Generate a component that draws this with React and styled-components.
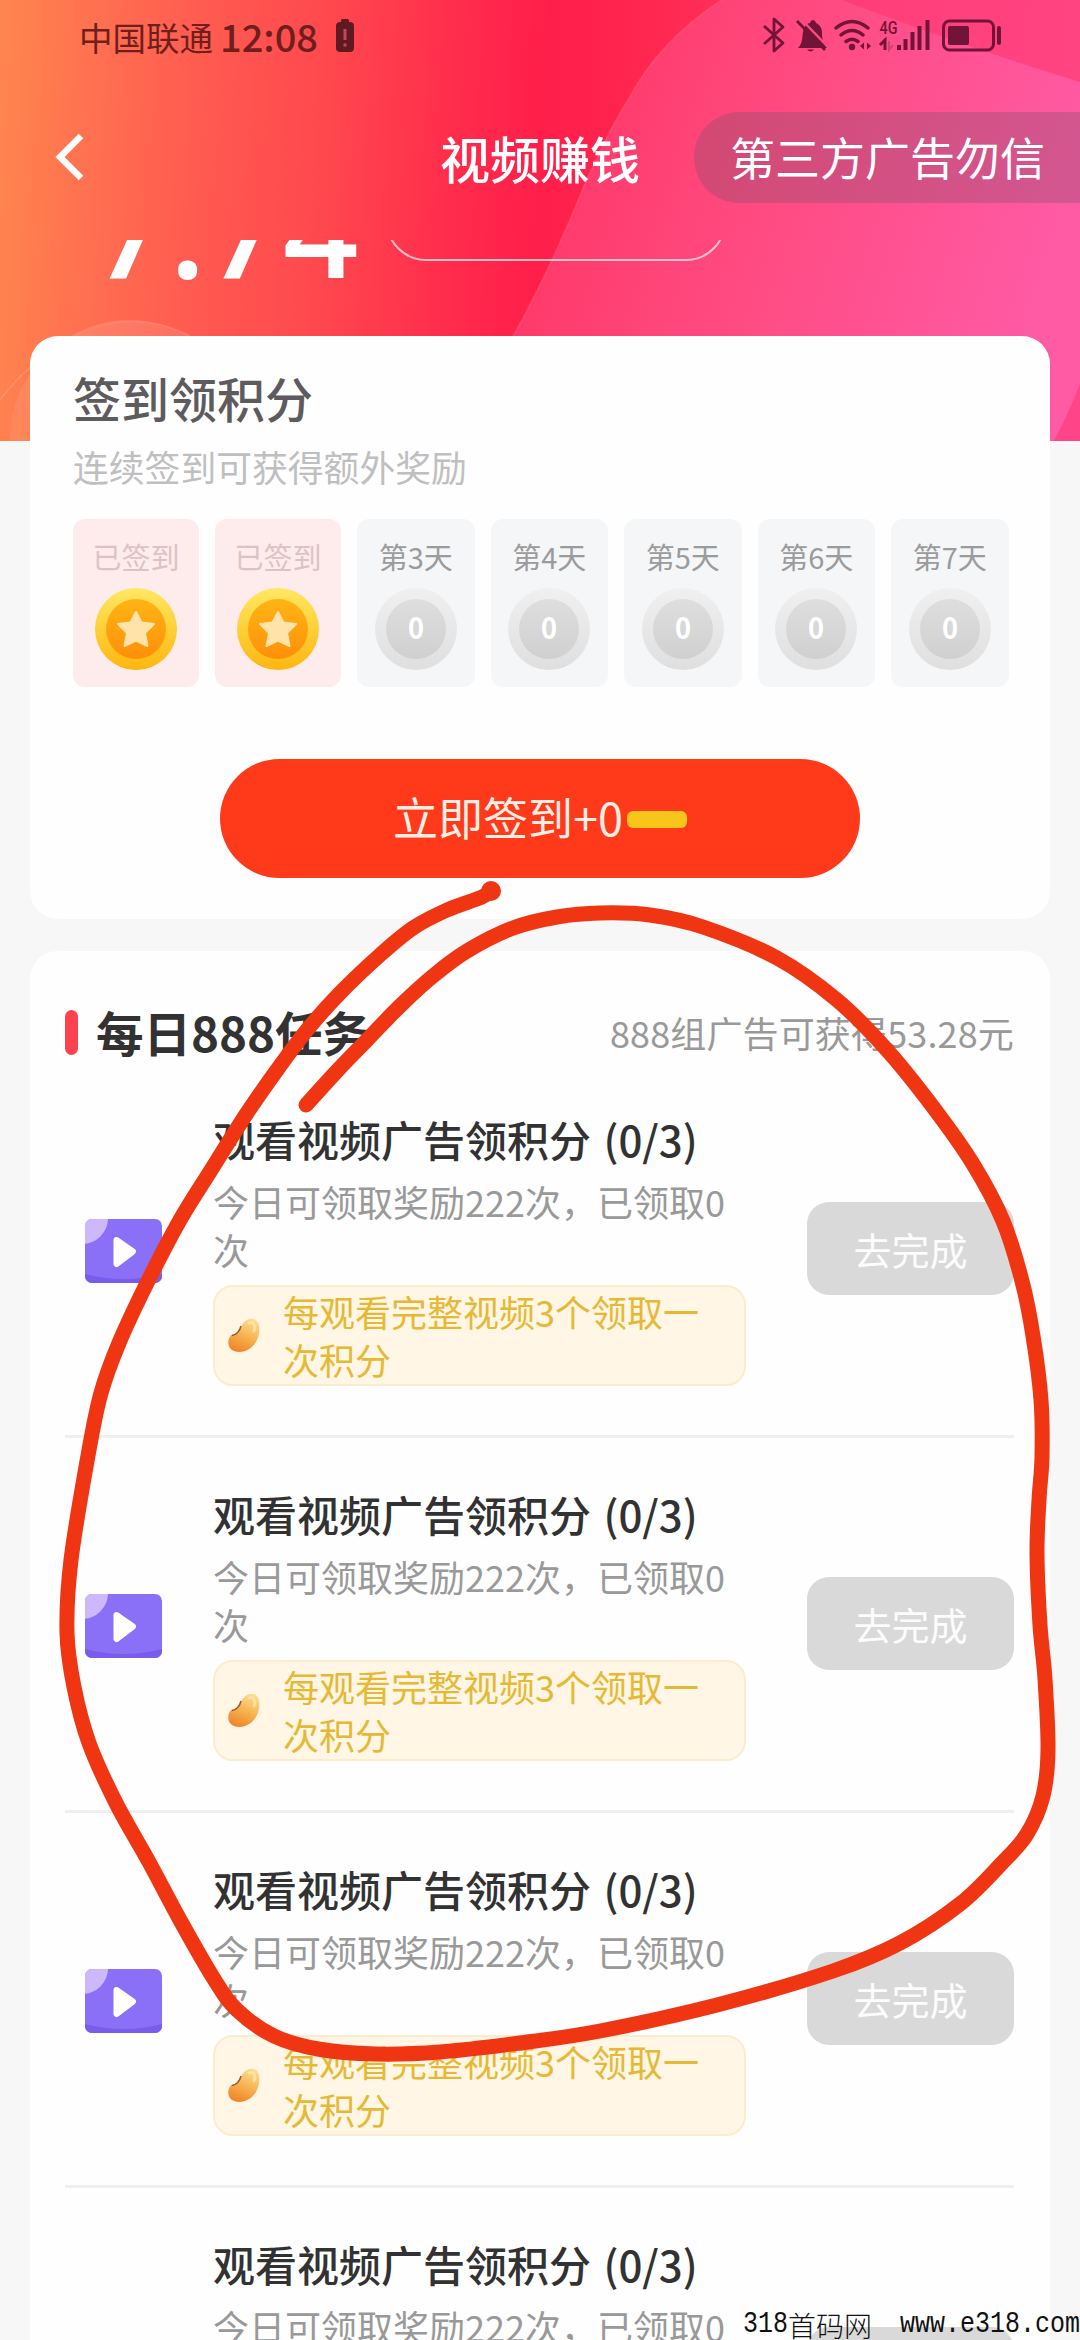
import styled, { createGlobalStyle } from 'styled-components'

const days = [
  { label: '已签到', done: true },
  { label: '已签到', done: true },
  { label: '第3天' },
  { label: '第4天' },
  { label: '第5天' },
  { label: '第6天' },
  { label: '第7天' },
]

const tasks = [1, 2, 3, 4]

// freehand stroke, drawn as a smooth curve through these points
const strokePoints = [
  [492, 890], [482, 897], [447, 910], [413, 928], [380, 955],
  [340, 993], [307, 1030], [277, 1070], [247, 1113], [213, 1167],
  [180, 1220], [147, 1283], [119, 1343], [101, 1393], [89, 1450],
  [71, 1560], [67, 1633], [74, 1687], [89, 1743], [116, 1803], [149, 1862],
  [180, 1920], [214, 1979], [237, 2010], [274, 2036], [318, 2049],
  [375, 2054], [440, 2052], [520, 2043], [600, 2031], [717, 2005],
  [833, 1971], [900, 1943], [960, 1904], [1002, 1863], [1027, 1834],
  [1043, 1796], [1048, 1750], [1045, 1679], [1040, 1625], [1037, 1554],
  [1039, 1500], [1042, 1457], [1041, 1400], [1033, 1336], [1022, 1281],
  [1003, 1221], [973, 1164], [933, 1107], [887, 1050], [837, 1000],
  [777, 958], [703, 927], [650, 915], [600, 913], [557, 917], [513, 928],
  [467, 951], [433, 976], [400, 1006], [367, 1040], [337, 1071],
  [306, 1105],
]

const smooth = (pts) =>
  pts.slice(0, -1).reduce((d, p, i) => {
    const prev = pts[i - 1] || p
    const next = pts[i + 1]
    const after = pts[i + 2] || next
    const c1 = [p[0] + (next[0] - prev[0]) / 6, p[1] + (next[1] - prev[1]) / 6]
    const c2 = [next[0] - (after[0] - p[0]) / 6, next[1] - (after[1] - p[1]) / 6]
    return `${d} C${c1} ${c2} ${next}`
  }, `M${pts[0]}`)

const HeaderArt = () => (
  <Backdrop viewBox="0 0 1080 441">
    <defs>
      <linearGradient id="blob" gradientUnits="userSpaceOnUse" x1="560" y1="0" x2="1080" y2="160">
        <stop offset="0" stopColor="#ff3564" />
        <stop offset="0.45" stopColor="#ff4a80" />
        <stop offset="1" stopColor="#ff5aa4" />
      </linearGradient>
      <linearGradient id="left" x1="0" y1="0" x2="0" y2="1">
        <stop offset="0" stopColor="#fff" stopOpacity="0.12" />
        <stop offset="1" stopColor="#fff" stopOpacity="0" />
      </linearGradient>
    </defs>
    <path
      d="M500 360 Q540 290 570 220 Q600 145 628 100 Q660 40 722 0 H842 Q960 45 1080 82 V441 H500Z"
      fill="url(#blob)"
    />
    <path
      d="M500 360 Q540 290 570 220 Q600 145 628 100 Q660 40 722 0"
      fill="none"
      stroke="#ff6a80"
      strokeOpacity="0.35"
      strokeWidth="2"
    />
    <path d="M1054 441 Q1068 415 1080 384 V441Z" fill="#ff4488" />
    <circle cx="130" cy="440" r="120" fill="url(#left)" />
    <path d="M70 338 Q130 306 190 336" fill="none" stroke="#ff8a70" strokeOpacity="0.5" strokeWidth="2" />
    <path d="M0 400 Q15 380 32 366" fill="none" stroke="#ffa080" strokeOpacity="0.5" strokeWidth="2" />
  </Backdrop>
)

const LowBattery = () => (
  <svg width="20" height="34" viewBox="0 0 20 34">
    <rect x="6" y="0" width="8" height="5" rx="1.5" fill="#5e1a20" />
    <rect x="1" y="3" width="18" height="30" rx="4" fill="#5e1a20" />
    <path d="M10 10v11M10 24.5v3" stroke="#c24a50" strokeWidth="3" />
  </svg>
)

const StatusIcons = () => (
  <svg width="242" height="38" viewBox="762 18 242 38" fill="none" stroke="#721437">
    <path d="M764 27 L783 44 L774 52 V20 L783 28 L764 45" strokeWidth="2.8" strokeLinejoin="round" />
    <path
      d="M798 49 C803 44 802 38 803 33 C804 27 808 24 810 24 C811 20 815 20 816 24 C820 26 822 29 822 34 C822 40 823 44 827 49Z"
      fill="#721437"
      stroke="none"
    />
    <path d="M807 50.500 h7 q-3.500 4 -7 0z" fill="#721437" stroke="none" />
    <path d="M801 20 L829 49" stroke="#ff4a80" strokeWidth="2.500" />
    <path d="M797 22 L825 51" strokeWidth="2.8" />
    <path d="M836 29 Q852 16 868 29 M841 36 Q852 27 863 36 M846 42.500 Q852 38 858 42.500" strokeWidth="3.500" strokeLinecap="round" />
    <circle cx="852" cy="48" r="3.200" fill="#721437" stroke="none" />
    <path d="M864 43.500v7l-4-3.500zM867 43.500v7l4-3.500z" fill="#721437" stroke="none" />
    <text
      x="879.500"
      y="35"
      fill="#721437"
      stroke="none"
      fontFamily="Roboto, sans-serif"
      fontWeight="500"
      fontSize="18"
      textLength="18"
      lengthAdjust="spacingAndGlyphs"
    >
      4G
    </text>
    <path d="M880 46 L885 41 V51" strokeWidth="3" />
    <path d="M889 42 V51 L893 46" strokeWidth="2" strokeOpacity="0.3" />
    <path d="M899 46v5M905.500 40v11M912.500 33v18M919.500 27v24M927.500 21v30" strokeWidth="4" />
    <rect x="943.500" y="22" width="50" height="29" rx="6" strokeWidth="3" />
    <rect x="948" y="27" width="21" height="19" rx="2" fill="#721437" stroke="none" />
    <path d="M999 29v15" strokeWidth="4" strokeLinecap="round" />
  </svg>
)

const Coin = ({ done }) => (
  <CoinBox>
    <svg width="82" height="82" viewBox="0 0 82 82">
      <defs>
        <linearGradient id="goldRim" x1="0" y1="0" x2="0" y2="1">
          <stop offset="0" stopColor="#ffe862" />
          <stop offset="1" stopColor="#fdb60f" />
        </linearGradient>
        <linearGradient id="goldFace" x1="0" y1="0" x2="0" y2="1">
          <stop offset="0" stopColor="#ffb514" />
          <stop offset="1" stopColor="#ff8f0a" />
        </linearGradient>
        <linearGradient id="greyRim" x1="0" y1="0" x2="0" y2="1">
          <stop offset="0" stopColor="#f0f0f1" />
          <stop offset="1" stopColor="#dfdfe0" />
        </linearGradient>
        <linearGradient id="greyFace" x1="0" y1="0" x2="0" y2="1">
          <stop offset="0" stopColor="#dedede" />
          <stop offset="1" stopColor="#d0d0d0" />
        </linearGradient>
      </defs>
      <circle cx="41" cy="41" r="41" fill={done ? 'url(#goldRim)' : 'url(#greyRim)'} />
      <circle cx="41" cy="41" r="30" fill={done ? 'url(#goldFace)' : 'url(#greyFace)'} />
      {done && (
        <path
          d="M41 24 L46.500 34.500 L59 36 L50 45 L52.500 58 L41 52.500 L29.500 58 L32 45 L23 36 L35.500 34.500Z"
          fill="#ffe3a8"
          stroke="#ffe3a8"
          strokeWidth="2"
          strokeLinejoin="round"
        />
      )}
    </svg>
    {!done && <CoinValue>0</CoinValue>}
  </CoinBox>
)

const VideoIcon = () => (
  <VideoSvg width="77" height="64" viewBox="0 0 77 64">
    <defs>
      <clipPath id="tile">
        <rect width="77" height="64" rx="7" />
      </clipPath>
    </defs>
    <g clipPath="url(#tile)">
      <rect width="77" height="64" fill="#8a70f7" />
      <circle cx="-3" cy="-1" r="26" fill="#cdb8fb" />
      <path d="M0 55 Q38 65 77 55 V64 H0Z" fill="#7a5ced" />
    </g>
    <path d="M31.500 21 L48 32.500 L31.500 45Z" fill="#fff" stroke="#fff" strokeWidth="6" strokeLinejoin="round" />
  </VideoSvg>
)

const Bean = () => (
  <svg width="34" height="36" viewBox="0 0 34 36">
    <defs>
      <linearGradient id="bean" x1="0.700" y1="0" x2="0.300" y2="1">
        <stop offset="0" stopColor="#fbdc92" />
        <stop offset="0.500" stopColor="#f7b350" />
        <stop offset="1" stopColor="#ee8428" />
      </linearGradient>
    </defs>
    <path
      d="M14 10 C17 3 24 0 29 3 C34 7 33 18 29 25 C24 33 15 37 7 34 C0 31 0 23 4 18 C9 18 13 15 14 10Z"
      fill="url(#bean)"
    />
    <path d="M14 9 C13 14 9 18 5 18.500" fill="none" stroke="#9a5a28" strokeWidth="1.500" />
    <path d="M22 6 C26 4 29 8 27 14" fill="none" stroke="#fff0c4" strokeWidth="3" strokeLinecap="round" opacity="0.500" />
  </svg>
)

const App = () => (
  <Screen>
    <GlobalStyle />
    <HeaderArt />
    <StatusBar>
      <Carrier>中国联通</Carrier>
      <Clock>12:08</Clock>
      <LowBattery />
      <StatusRight>
        <StatusIcons />
      </StatusRight>
    </StatusBar>
    <NavBar>
      <BackButton>
        <svg width="30" height="48" viewBox="0 0 30 48">
          <path d="M27 3 L6 24 L27 45" fill="none" stroke="#fff" strokeWidth="6.500" />
        </svg>
      </BackButton>
      <NavTitle>视频赚钱</NavTitle>
      <Warning>第三方广告勿信</Warning>
    </NavBar>
    <Balance>
      <Amount>7.74</Amount>
      <Withdraw />
    </Balance>

    <SignCard>
      <SignTitle>签到领积分</SignTitle>
      <SignHint>连续签到可获得额外奖励</SignHint>
      <Days>
        {days.map(({ label, done }, i) => (
          <Day key={i} $done={done}>
            <DayLabel $done={done}>{label}</DayLabel>
            <Coin done={done} />
          </Day>
        ))}
      </Days>
      <SignButton>
        立即签到+0
        <Dash />
      </SignButton>
    </SignCard>

    <TaskCard>
      <TaskHeader>
        <TaskHeading>每日888任务</TaskHeading>
        <TaskSummary>888组广告可获得53.28元</TaskSummary>
      </TaskHeader>
      {tasks.map((id) => (
        <Task key={id}>
          <VideoIcon />
          <TaskBody>
            <TaskTitle>观看视频广告领积分 (0/3)</TaskTitle>
            <TaskText>今日可领取奖励222次，已领取0次</TaskText>
            <Tip>
              <Bean />
              <TipText>每观看完整视频3个领取一次积分</TipText>
            </Tip>
          </TaskBody>
          <TaskButton>去完成</TaskButton>
        </Task>
      ))}
    </TaskCard>

    <Scribble viewBox="0 0 1080 2340">
      <path d={smooth(strokePoints)} />
      <circle cx="491" cy="891" r="10" />
    </Scribble>
    <Watermark>
      <Latin>318</Latin>首码网
      <Latin $gap>www.e318.com</Latin>
    </Watermark>
  </Screen>
)

const GlobalStyle = createGlobalStyle`
  * {
    box-sizing: border-box;
  }

  body {
    margin: 0;
    background: #f7f7f7;
    font-family: "Noto Sans CJK SC", "Noto Sans", sans-serif;
  }

  button {
    border: 0;
    padding: 0;
    font-family: inherit;
  }

  svg {
    display: block;
    flex-shrink: 0;
  }
`

const Screen = styled.div`
  position: relative;
  display: flex;
  flex-direction: column;
  width: 1080px;
  height: 2340px;
  overflow: hidden;
  background: #f7f7f7;
`

const Backdrop = styled.svg`
  position: absolute;
  top: 0;
  left: 0;
  width: 1080px;
  height: 441px;
  background: linear-gradient(
    93deg,
    #ff864e 0%,
    #ff7050 9%,
    #ff5a50 19%,
    #ff484e 30%,
    #ff2c4c 42%,
    #ff1e4a 50%,
    #ff2850 60%,
    #ff3f7a 80%,
    #ff4482 100%
  );
`

const StatusBar = styled.div`
  position: relative;
  display: flex;
  flex-shrink: 0;
  align-items: center;
  height: 74px;
  padding: 0 76px 2px 79px;
  color: #6e1e1c;
`

const Carrier = styled.span`
  font-size: 33.5px;
`

const Clock = styled.span`
  margin: 0 17px 0 7px;
  font-size: 38px;
  font-weight: 500;
  line-height: 70px;
`

const StatusRight = styled.div`
  margin-left: auto;
`

const NavBar = styled.div`
  position: relative;
  display: grid;
  flex-shrink: 0;
  grid-template-columns: 1fr auto 1fr;
  align-items: center;
  height: 166px;
  color: #fff;
`

const BackButton = styled.button`
  justify-self: start;
  margin-left: 54px;
  background: none;
`

const NavTitle = styled.h1`
  margin: 0;
  font-size: 50px;
  font-weight: 500;
  line-height: 70px;
`

const Warning = styled.div`
  justify-self: end;
  width: 386px;
  height: 91px;
  padding-left: 36px;
  border-radius: 46px 0 0 46px;
  background: rgba(130, 80, 110, 0.35);
  font-size: 45px;
  line-height: 89px;
  white-space: nowrap;
`

/* scrolled under the nav bar, only its lower edge shows */
const Balance = styled.div`
  position: relative;
  display: flex;
  flex-shrink: 0;
  align-items: flex-end;
  height: 96px;
  padding: 0 0 58px 93px;
  overflow: hidden;
  color: #fff;
`

const Amount = styled.div`
  width: 293px;
  margin-bottom: -15px;
  font-family: 'Open Sans', 'Noto Sans', sans-serif;
  font-size: 132px;
  font-weight: 600;
  line-height: 132px;
  letter-spacing: 1px;
`

const Withdraw = styled.div`
  width: 340px;
  height: 80px;
  margin-bottom: -41px;
  border: 2px solid rgba(255, 225, 230, 0.8);
  border-radius: 40px;
  transform: translateY(-58px);
`

const SignCard = styled.section`
  position: relative;
  flex-shrink: 0;
  width: 1020px;
  height: 583px;
  margin: 0 30px 32px;
  padding: 31px 41px 0 43px;
  border-radius: 28px;
  background: #fefefe;
`

const SignTitle = styled.h2`
  margin: 0;
  color: #5d5b5e;
  font-size: 48px;
  font-weight: 500;
  line-height: 60px;
`

const SignHint = styled.p`
  margin: 14px 0 28px;
  color: #c0bfc0;
  font-size: 35.8px;
  line-height: 50px;
`

const Days = styled.div`
  display: flex;
  gap: 16px;
`

const Day = styled.div`
  display: flex;
  flex-direction: column;
  align-items: center;
  width: ${({ $done }) => ($done ? '126px' : '117.5px')};
  height: 168px;
  padding-top: 19px;
  border-radius: 12px;
  background: ${({ $done }) => ($done ? '#fdeceb' : '#f5f6f8')};
`

const DayLabel = styled.span`
  margin-bottom: 14px;
  color: ${({ $done }) => ($done ? '#dcc3c3' : '#9b9b9c')};
  font-size: 29px;
  line-height: 36px;
`

const CoinBox = styled.div`
  display: grid;
  place-items: center;

  > * {
    grid-area: 1 / 1;
  }
`

const CoinValue = styled.span`
  color: #fff;
  font-size: 31px;
  font-weight: 700;
  line-height: 36px;
  transform: translateY(-3px) scaleX(0.88);
`

const SignButton = styled.button`
  display: flex;
  align-items: center;
  justify-content: center;
  width: 640px;
  height: 119px;
  margin: 72px 0 0 147px;
  padding-bottom: 4px;
  border-radius: 60px;
  background: #ff3a1a;
  color: #ffeee6;
  font-size: 45px;
`

const Dash = styled.span`
  width: 60px;
  height: 17px;
  margin: 5px 0 0 4px;
  border-radius: 6px;
  background: #f8c51a;
`

const TaskCard = styled.section`
  position: relative;
  flex-shrink: 0;
  width: 1020px;
  margin: 0 30px;
  padding: 50px 36px 0 35px;
  border-radius: 28px;
  background: #fefefe;
`

const TaskHeader = styled.div`
  display: flex;
  align-items: center;
  justify-content: space-between;
  height: 62px;
`

const TaskHeading = styled.h2`
  display: flex;
  align-items: center;
  margin: 0;
  color: #323233;
  font-size: 47.5px;
  font-weight: 700;
  line-height: 62px;

  &::before {
    content: '';
    width: 13px;
    height: 45px;
    margin-right: 18px;
    border-radius: 7px;
    background: #fb4350;
  }
`

const TaskSummary = styled.span`
  color: #999;
  font-size: 36px;
  letter-spacing: 0.15px;
  line-height: 62px;
`

const Task = styled.div`
  display: flex;
  align-items: center;
  height: 375px;
  padding: 0 0 2px 20px;
  border-bottom: 3px solid #efefef;
`

const VideoSvg = styled.svg`
  margin-top: 5px;
`

const TaskBody = styled.div`
  width: 533px;
  margin: 0 61px 0 51px;
`

const TaskTitle = styled.h3`
  margin: 0 0 10px;
  color: #323233;
  font-size: 42px;
  font-weight: 500;
  line-height: 56px;
  word-spacing: 3px;
  white-space: nowrap;
`

const TaskText = styled.p`
  margin: 0 0 12px;
  color: #999;
  font-size: 36px;
  line-height: 48px;
`

const Tip = styled.div`
  display: flex;
  align-items: center;
  height: 101px;
  padding-left: 12px;
  border: 2px solid #fbeccd;
  border-radius: 20px;
  background: #fff6e6;
`

const TipText = styled.span`
  width: 424px;
  margin-left: 22px;
  color: #e6b935;
  font-size: 36px;
  line-height: 48px;
`

const TaskButton = styled.button`
  width: 207px;
  height: 93px;
  border-radius: 22px;
  background: #d9d9d9;
  color: #fcfcfc;
  font-size: 38px;
`

const Scribble = styled.svg`
  position: absolute;
  top: 0;
  left: 0;
  width: 1080px;
  height: 2340px;
  fill: #f03512;

  path {
    fill: none;
    stroke: #f03512;
    stroke-width: 15px;
    stroke-linecap: round;
    stroke-linejoin: round;
  }
`

const Watermark = styled.div`
  position: absolute;
  right: 0;
  bottom: 1px;
  display: flex;
  align-items: center;
  height: 28px;
  color: #111;
  font-size: 28px;
  font-weight: 300;
  line-height: 26px;
  white-space: nowrap;
`

const Latin = styled.span`
  margin-left: ${({ $gap }) => ($gap ? '28px' : '0')};
  font-family: 'Liberation Mono', monospace;
  font-size: 25px;
  transform: scaleY(1.15);
`

export default App
